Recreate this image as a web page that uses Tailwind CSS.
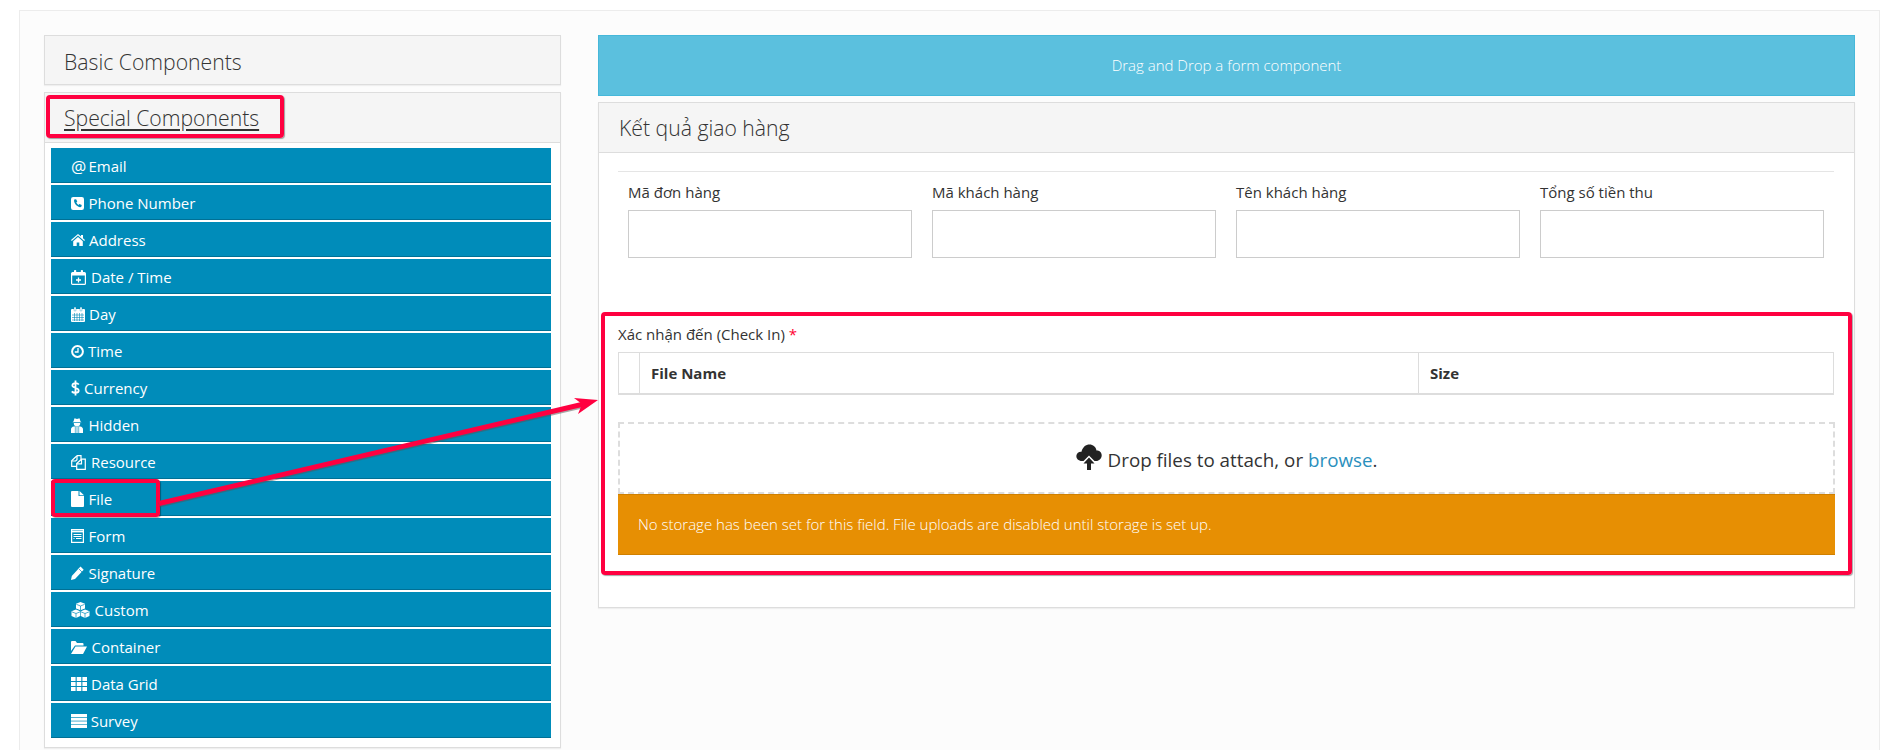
<!DOCTYPE html>
<html><head><meta charset="utf-8"><script src="https://cdn.jsdelivr.net/npm/@tailwindcss/browser@4"></script></head>
<body class="bg-white">
<div class="relative w-[1898px] h-[750px] overflow-hidden font-['Open_Sans',sans-serif] text-[15px] text-[#333]">
 <div class="absolute left-[19px] top-[10px] w-[1861px] h-[760px] bg-[#fcfcfc] border border-[#ececec] pt-[24px] pl-[24px] flex">
  <!-- left -->
  <div class="w-[517px] shrink-0 flex flex-col gap-[7px]">
   <div class="h-[50px] bg-[#f5f5f5] border border-[#ddd] flex items-center pl-[19px] pt-[3px] text-[21.2px] font-light shadow-[0_1px_1px_rgba(0,0,0,.05)]">Basic Components</div>
   <div class="h-[656px] border border-[#ddd] bg-white shadow-[0_1px_1px_rgba(0,0,0,.05)]">
    <div class="h-[50px] bg-[#f5f5f5] border-b border-[#ddd] flex items-center pl-[19px] text-[21.2px] font-light underline underline-offset-[3px]">Special Components</div>
    <div class="pt-[5px] pl-[6px] w-[506px] flex flex-col gap-[2px] text-white">
     <div class="h-[35px] bg-[#008cba] border-b border-[#007095] flex items-center pl-[20px] pt-[2px]"><span class="w-[17.5px] text-[17px] leading-none">@</span>Email</div>
     <div class="h-[35px] bg-[#008cba] border-b border-[#007095] flex items-center pl-[20px] pt-[2px]"><svg class="w-[13px] h-[13px] mr-[4.5px]" viewBox="0 0 13 13"><rect width="13" height="13" rx="2.2" fill="#fff"/><path d="M3.200 2.600c-1.100 3.300 3.500 8.500 7 7.500l.6-2-2.400-1.200-1 1c-1-.5-1.700-1.300-2.100-2.300l1-1-1.200-2.400z" fill="#008cba"/></svg>Phone Number</div>
     <div class="h-[35px] bg-[#008cba] border-b border-[#007095] flex items-center pl-[20px] pt-[2px]"><svg class="w-[14px] h-[12px] mr-[4px]" viewBox="0 0 14 12" fill="#fff"><path d="M7 0 10 2.6V1h2v3.3L14 6l-.8.9L7 1.6.8 6.9 0 6z"/><path d="M2.2 7.2 7 3l4.8 4.2V12H8.300V8.500H5.700V12H2.200z"/></svg>Address</div>
     <div class="h-[35px] bg-[#008cba] border-b border-[#007095] flex items-center pl-[20px] pt-[2px]"><svg class="w-[15px] h-[15px] mr-[5px]" viewBox="0 0 15 15"><rect x=".6" y="2.600" width="13.800" height="11.800" rx="1" fill="none" stroke="#fff" stroke-width="1.200"/><rect x="1" y="2.500" width="13" height="3" fill="#fff"/><rect x="3" y="0" width="2.200" height="4" rx=".8" fill="#fff"/><rect x="9.800" y="0" width="2.200" height="4" rx=".8" fill="#fff"/><path d="M7.500 7.500v5M5 10h5" stroke="#fff" stroke-width="1.300"/></svg>Date / Time</div>
     <div class="h-[35px] bg-[#008cba] border-b border-[#007095] flex items-center pl-[20px] pt-[2px]"><svg class="w-[14px] h-[15px] mr-[4px]" viewBox="0 0 14 15"><rect y="2" width="14" height="13" rx="1" fill="#fff"/><rect x="3" y="0" width="2" height="4" rx=".8" fill="#fff" stroke="#008cba" stroke-width=".4"/><rect x="9" y="0" width="2" height="4" rx=".8" fill="#fff" stroke="#008cba" stroke-width=".4"/><path d="M1 8h12M1 10.500h12M1 13h12M3.500 6v8M6 6v8M8.500 6v8M11 6v8" stroke="#008cba" stroke-width=".6"/></svg>Day</div>
     <div class="h-[35px] bg-[#008cba] border-b border-[#007095] flex items-center pl-[20px] pt-[2px]"><svg class="w-[13px] h-[13px] mr-[4px]" viewBox="0 0 13 13"><circle cx="6.500" cy="6.500" r="5.400" fill="none" stroke="#fff" stroke-width="2"/><path d="M7 3v4H3.800" fill="none" stroke="#fff" stroke-width="1.300"/></svg>Time</div>
     <div class="h-[35px] bg-[#008cba] border-b border-[#007095] flex items-center pl-[20px] pt-[2px]"><svg class="w-[9px] h-[16px] mr-[4px]" viewBox="0 0 9 16"><path d="M7.800 4.500C7 3.500 5.800 3.200 4.500 3.200 2.700 3.200 1.400 4 1.400 5.400c0 3 6.300 1.700 6.300 5.200 0 1.500-1.400 2.300-3.300 2.300-1.400 0-2.800-.5-3.600-1.500M4.500 .5v15" fill="none" stroke="#fff" stroke-width="1.800"/></svg>Currency</div>
     <div class="h-[35px] bg-[#008cba] border-b border-[#007095] flex items-center pl-[20px] pt-[2px]"><svg class="w-[12px] h-[15px] mr-[5.500px]" viewBox="0 0 12 15" fill="#fff"><path d="M3.500 .3 6 1l2.500-.7 1 3.300 1.100.7H1.400l1.100-.7z"/><path d="M2.800 5h6.400c.3 2-1 3.300-3.200 3.300S2.500 7 2.800 5z"/><path d="M0 15v-3.500C0 9.700 1.200 8.800 2.800 8.500h6.400c1.600.3 2.800 1.200 2.800 3V15z"/><path d="M4.300 9v6M6 9v6M7.700 9v6" stroke="#008cba" stroke-width=".6"/></svg>Hidden</div>
     <div class="h-[35px] bg-[#008cba] border-b border-[#007095] flex items-center pl-[20px] pt-[2px]"><svg class="w-[15px] h-[15px] mr-[5px]" viewBox="0 0 15 15" fill="none" stroke="#fff" stroke-width="1.200"><path d="M6 .7h4v3.600M6 .7 2.500 4 .7 5.700v5.600h5"/><path d="M.7 6h4l1.300-1.300V.7"/><path d="M10.500 4.200h3.800v10.100H5.700V8.500z"/><path d="M5.700 8.800h4.800V4.200"/></svg>Resource</div>
     <div class="h-[35px] bg-[#008cba] border-b border-[#007095] flex items-center pl-[20px] pt-[2px]"><svg class="w-[13px] h-[16px] mr-[4.500px]" viewBox="0 0 13 16" fill="#fff"><path d="M0 1a1 1 0 0 1 1-1h6.500v5H13v10a1 1 0 0 1-1 1H1a1 1 0 0 1-1-1z"/><path d="M8.500 0 13 4.200H8.500z"/></svg>File</div>
     <div class="h-[35px] bg-[#008cba] border-b border-[#007095] flex items-center pl-[20px] pt-[2px]"><svg class="w-[13px] h-[14px] mr-[4.500px]" viewBox="0 0 13 14" fill="none" stroke="#fff"><rect x=".6" y=".6" width="11.800" height="12.800" stroke-width="1.200"/><path d="M1 2.500h11" stroke-width="1.800"/><path d="M2.500 5.500h8M2.500 7.500h8M5 9.500h5.500M2.500 9.500h1" stroke-width="1"/></svg>Form</div>
     <div class="h-[35px] bg-[#008cba] border-b border-[#007095] flex items-center pl-[20px] pt-[2px]"><svg class="w-[13px] h-[14px] mr-[4.500px]" viewBox="0 0 13 14" fill="#fff"><path d="M9.500.6 12.700 3.800 4 13 0 14l.8-4z"/><path d="M8 3l3 3" stroke="#008cba" stroke-width=".7"/></svg>Signature</div>
     <div class="h-[35px] bg-[#008cba] border-b border-[#007095] flex items-center pl-[20px] pt-[2px]"><svg class="w-[19px] h-[16px] mr-[4.500px]" viewBox="0 0 19 16" fill="#fff"><path d="M9.500 0 14 1.800V6.500L9.500 8.300 5 6.500V1.800z"/><path d="M5 7.500 9.200 9.300V14L5 16 .5 14V9.300z"/><path d="M14 7.500 18.500 9.300V14L14 16 9.800 14V9.300z"/><path d="M5.300 2.300 9.500 4l4.200-1.700M9.500 4v4M.8 9.800 5 11.500l4.200-1.700M5 11.500V16M9.900 9.800 14 11.500l4.200-1.700M14 11.500V16" fill="none" stroke="#008cba" stroke-width=".7"/></svg>Custom</div>
     <div class="h-[35px] bg-[#008cba] border-b border-[#007095] flex items-center pl-[20px] pt-[2px]"><svg class="w-[16px] h-[13px] mr-[4.500px]" viewBox="0 0 16 13" fill="#fff"><path d="M0 1a1 1 0 0 1 1-1h3.500l1.500 2h5.500a1 1 0 0 1 1 1v1.500H4L0 10z"/><path d="M4.500 5.500H16L12 13H0z"/></svg>Container</div>
     <div class="h-[35px] bg-[#008cba] border-b border-[#007095] flex items-center pl-[20px] pt-[2px]"><svg class="w-[16px] h-[14px] mr-[4px]" viewBox="0 0 16 14" fill="#fff"><rect width="4.600" height="4"/><rect x="5.700" width="4.600" height="4"/><rect x="11.400" width="4.600" height="4"/><rect y="5" width="4.600" height="4"/><rect x="5.700" y="5" width="4.600" height="4"/><rect x="11.400" y="5" width="4.600" height="4"/><rect y="10" width="4.600" height="4"/><rect x="5.700" y="10" width="4.600" height="4"/><rect x="11.400" y="10" width="4.600" height="4"/></svg>Data Grid</div>
     <div class="h-[35px] bg-[#008cba] border-b border-[#007095] flex items-center pl-[20px] pt-[2px]"><svg class="w-[16px] h-[14px] mr-[3.700px]" viewBox="0 0 16 14" fill="#fff"><rect width="16" height="3"/><rect y="3.700" width="16" height="3"/><rect y="7.400" width="16" height="3"/><rect y="11" width="16" height="3"/></svg>Survey</div>
    </div>
   </div>
  </div>
  <!-- gap -->
  <div class="w-[37px] shrink-0"></div>
  <!-- right -->
  <div class="w-[1257px] shrink-0 flex flex-col gap-[6px]">
   <div class="h-[61px] bg-[#5bc0de] border border-[#46b8da] flex items-center justify-center text-white font-light">Drag and Drop a form component</div>
   <div class="h-[506px] border border-[#ddd] bg-white shadow-[0_1px_1px_rgba(0,0,0,.05)]">
    <div class="h-[50px] bg-[#f5f5f5] border-b border-[#ddd] flex items-center pl-[20px] text-[21.2px] font-light">Kết quả giao hàng</div>
    <div class="pt-[18px] pl-[19px] w-[1235px]">
     <div class="h-px bg-[#e5e5e5]"></div>
     <div class="grid grid-cols-4 mt-[11px]">
      <div class="px-[10px]"><div class="h-[20px] leading-[18px]">Mã đơn hàng</div><div class="mt-[7px] h-[48px] border border-[#ccc] bg-white"></div></div>
      <div class="px-[10px]"><div class="h-[20px] leading-[18px]">Mã khách hàng</div><div class="mt-[7px] h-[48px] border border-[#ccc] bg-white"></div></div>
      <div class="px-[10px]"><div class="h-[20px] leading-[18px]">Tên khách hàng</div><div class="mt-[7px] h-[48px] border border-[#ccc] bg-white"></div></div>
      <div class="px-[10px]"><div class="h-[20px] leading-[18px]">Tổng số tiền thu</div><div class="mt-[7px] h-[48px] border border-[#ccc] bg-white"></div></div>
     </div>
     <div class="mt-[67px] h-[20px] leading-[18px]">Xác nhận đến (Check In) <span class="text-[#ff0033]">*</span></div>
     <div class="mt-[7px] h-[43px] grid grid-cols-[21px_779px_1fr] border border-b-[2px] border-[#ddd] font-bold">
      <div class="border-r border-[#ddd]"></div>
      <div class="border-r border-[#ddd] flex items-center pl-[11px]">File Name</div>
      <div class="flex items-center pl-[11px]">Size</div>
     </div>
     <div class="mt-[27px] w-[1217px] h-[72px] border-2 border-dashed border-[#ddd] flex items-center justify-center text-[18.8px]">
      <svg class="w-[26px] h-[26px] mr-[6px] mb-[2px]" viewBox="0 0 26 26"><path d="M6 17C2.500 17 0 14.500 .4 11.500 .8 9 3 7.500 5.500 7.800 6.500 3 10 .5 13.500.5c3.500 0 6.500 2.500 7 6 3-.3 5.200 2 5.200 4.700 0 3.200-2.500 5.800-5.700 5.800h-1.500L13 11.500 7.500 17z" fill="#222"/><path d="M13 13.500 18.500 19.500H15V26H11V19.500H7.500z" fill="#222"/></svg>
      <span class="mt-[4px]">Drop files to attach, or <span class="text-[#2a8fbd]">browse</span>.</span>
     </div>
     <div class="w-[1217px] h-[61px] bg-[#e78f03] border-t border-b border-[#d08000] flex items-center pl-[20px] text-white font-light">No storage has been set for this field. File uploads are disabled until storage is set up.</div>
    </div>
   </div>
  </div>
 </div>
 <!-- annotations -->
 <div class="absolute left-[46px] top-[95px] w-[238px] h-[43px] border-[4px] border-[#ff0040] rounded-[4px] shadow-[1px_1px_1px_rgba(0,0,0,.35)]"></div>
 <div class="absolute left-[51px] top-[479px] w-[109px] h-[38px] border-[4px] border-[#ff0040] rounded-[4px] shadow-[1px_1px_1px_rgba(0,0,0,.35)]"></div>
 <div class="absolute left-[601px] top-[312px] w-[1251px] h-[263px] border-[4px] border-[#ff0040] rounded-[4px] shadow-[1px_1px_1px_rgba(0,0,0,.35)]"></div>
 <svg class="absolute left-0 top-0 w-[1898px] h-[750px] pointer-events-none" viewBox="0 0 1898 750"><path d="M159 505 586 405" stroke="#555" stroke-width="5" opacity=".5"/><path d="M159 503.500 586 403.500" stroke="#ff0040" stroke-width="5"/><path d="M598 400 574 398 582 404 578 414z" fill="#ff0040"/></svg>
</div>
</body></html>
